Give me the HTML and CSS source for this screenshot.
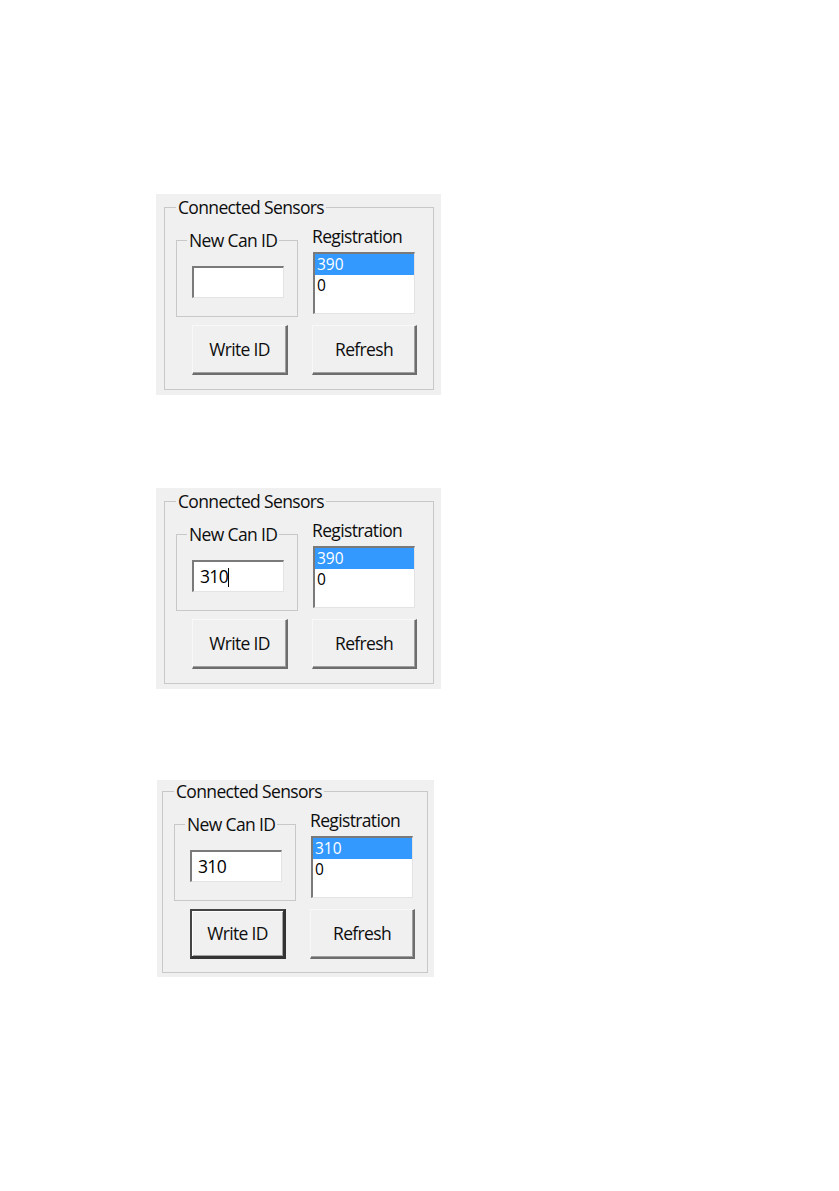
FILE: index.html
```html
<!DOCTYPE html>
<html>
<head>
<meta charset="utf-8">
<title>Connected Sensors</title>
<link rel="stylesheet" href="styles.css">
</head>
<body>
  <div class="panel p1">
    <div class="group outer">
      <div class="caption">Connected Sensors</div>
      <div class="row top-row">
        <div class="group inner">
          <div class="caption">New Can ID</div>
          <div class="textbox"></div>
        </div>
        <div class="reg">
          <div class="label">Registration</div>
          <div class="listbox">
            <div class="item selected">390</div>
            <div class="item">0</div>
          </div>
        </div>
      </div>
      <div class="row buttons">
        <div class="btn write">Write ID</div>
        <div class="btn refresh">Refresh</div>
      </div>
    </div>
  </div>

  <div class="panel p2">
    <div class="group outer">
      <div class="caption">Connected Sensors</div>
      <div class="row top-row">
        <div class="group inner">
          <div class="caption">New Can ID</div>
          <div class="textbox">310<span class="caret"></span></div>
        </div>
        <div class="reg">
          <div class="label">Registration</div>
          <div class="listbox">
            <div class="item selected">390</div>
            <div class="item">0</div>
          </div>
        </div>
      </div>
      <div class="row buttons">
        <div class="btn write">Write ID</div>
        <div class="btn refresh">Refresh</div>
      </div>
    </div>
  </div>

  <div class="panel p3">
    <div class="group outer">
      <div class="caption">Connected Sensors</div>
      <div class="row top-row">
        <div class="group inner">
          <div class="caption">New Can ID</div>
          <div class="textbox">310</div>
        </div>
        <div class="reg">
          <div class="label">Registration</div>
          <div class="listbox">
            <div class="item selected">310</div>
            <div class="item">0</div>
          </div>
        </div>
      </div>
      <div class="row buttons">
        <div class="btn write default">Write ID</div>
        <div class="btn refresh">Refresh</div>
      </div>
    </div>
  </div>
</body>
</html>
```

FILE: styles.css
```css
html, body {
  margin: 0;
  padding: 0;
  background: #ffffff;
}

body {
  font-family: "Open Sans", "Noto Sans", "DejaVu Sans", sans-serif;
  font-size: 17.5px;
  line-height: 20px;
  letter-spacing: -0.65px;
  color: #0d0d0d;
}

.panel {
  box-sizing: border-box;
  width: 285px;
  height: 201px;
  margin-left: 156px;
  padding: 13px 0 0 8px;
  background: #f0f0f0;
}

.p1 { margin-top: 194px; }
.p2 { margin-top: 93px; }
.p3 { margin-top: 91px; margin-left: 157px; width: 277px; height: 197px; }

.group {
  box-sizing: border-box;
  border: 1px solid #c8c8c8;
}

.outer {
  width: 270px;
  height: 183px;
}

.p3 .outer {
  width: 266px;
  height: 182px;
  margin-left: -3px;
  margin-top: -2px;
}

.caption {
  width: fit-content;
  height: 20px;
  margin: -11px 0 0 11px;
  padding: 0 2px;
  background: #f0f0f0;
  white-space: nowrap;
}

.row {
  display: flex;
  align-items: flex-start;
}

.top-row {
  height: 100px;
}

.inner {
  width: 122px;
  height: 77px;
  margin: 23px 0 0 11px;
}

.inner .caption {
  margin-left: 10px;
}

.textbox {
  box-sizing: border-box;
  width: 92px;
  height: 32px;
  margin: 16px 0 0 15px;
  padding: 4px 0 0 6px;
  background: #ffffff;
  border-style: solid;
  border-width: 2px 1px 1px 2px;
  border-color: #7a7a7a #e3e3e3 #e3e3e3 #7a7a7a;
  color: #000;
}

.caret {
  display: inline-block;
  width: 1px;
  height: 19px;
  background: #000;
  vertical-align: -4px;
}

.reg {
  margin: 9px 0 0 14px;
}

.label {
  height: 20px;
  white-space: nowrap;
}

.listbox {
  box-sizing: border-box;
  width: 102px;
  height: 62px;
  margin: 6px 0 0 1px;
  background: #ffffff;
  border-style: solid;
  border-width: 2px 1px 1px 2px;
  border-color: #7a7a7a #e3e3e3 #e3e3e3 #7a7a7a;
  color: #000;
}

.item {
  height: 21px;
  line-height: 21px;
  font-size: 15.5px;
  letter-spacing: 0;
  padding-left: 2px;
}

.item.selected {
  background: #3399ff;
  color: #ffffff;
}

.buttons {
  margin-top: 8px;
}

.btn {
  box-sizing: border-box;
  height: 50px;
  display: flex;
  align-items: center;
  justify-content: center;
  background: #f0f0f0;
  border-style: solid;
  border-width: 1px 2px 2px 1px;
  border-color: #f8f8f8 #6d6d6d #6d6d6d #f8f8f8;
  box-shadow: inset -1px -1px 0 #a0a0a0;
  padding-bottom: 1px;
}

.write {
  width: 96px;
  margin-left: 27px;
}

.refresh {
  width: 105px;
  margin-left: 24px;
}

.write.default {
  border-width: 2px 3px 3px 2px;
  border-color: #444 #333 #333 #444;
  box-shadow: inset 1px 1px 0 #fdfdfd, inset -1px -1px 0 #a0a0a0;
}
```
